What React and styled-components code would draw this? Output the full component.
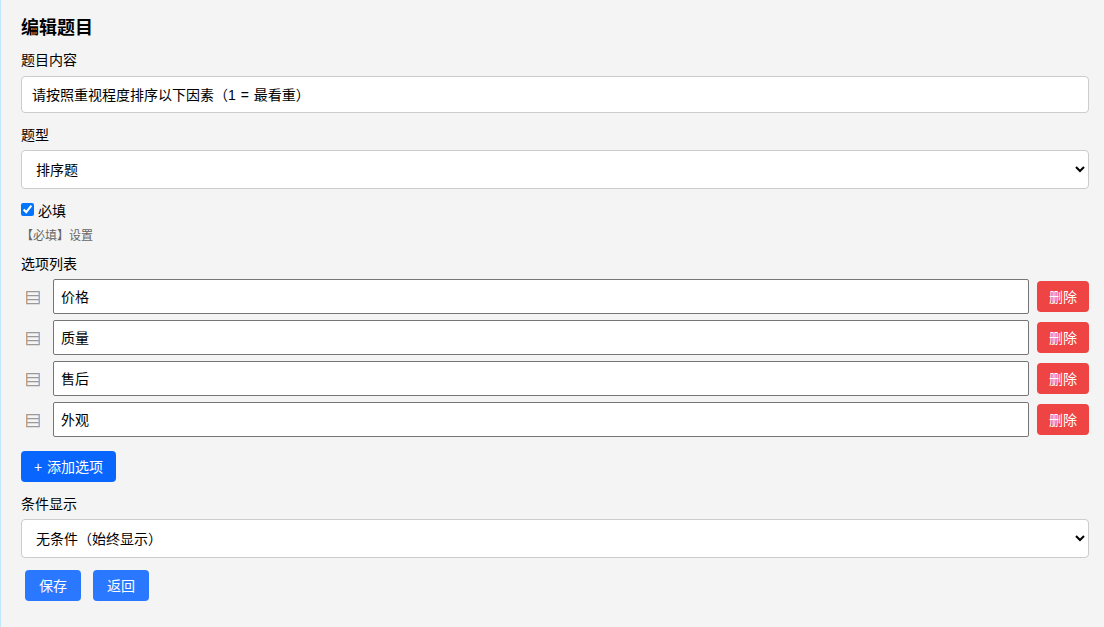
import React from "react";
import styled, { createGlobalStyle } from "styled-components";

const GlobalStyle = createGlobalStyle`
  html, body {
    margin: 0;
    padding: 0;
    background: #f4f4f4;
  }
  body {
    font-family: "Liberation Sans", Arial, "Noto Sans CJK SC", sans-serif;
    color: #000;
  }
`;

const Page = styled.div`
  box-sizing: border-box;
  height: 627px;
  padding: 17px 15px 0 20px;
  border-left: 1px solid #bfe6fb;
  overflow: hidden;
`;

const Title = styled.h2`
  margin: 0 0 13px;
  font-size: 18px;
  line-height: 22px;
  font-weight: 700;
`;

const Label = styled.label`
  display: block;
  margin-top: ${(p) => p.$top || 0}px;
  margin-bottom: ${(p) => p.$gap || 7}px;
  font-size: 14px;
  line-height: 17px;
`;

const TextInput = styled.input`
  display: block;
  box-sizing: border-box;
  width: 100%;
  height: 37px;
  margin-bottom: 14px;
  padding: 0 10px 2px;
  border: 1px solid #ccc;
  border-radius: 4px;
  background: #fff;
  font: inherit;
  font-size: 14px;
  word-spacing: 1px;
`;

const Select = styled.select`
  display: block;
  box-sizing: border-box;
  width: 100%;
  height: 39px;
  margin-bottom: ${(p) => p.$gap || 0}px;
  padding: 0 10px;
  border: 1px solid #ccc;
  border-radius: 4px;
  background: #fff;
  font: inherit;
  font-size: 14px;
  color: #000;
`;

const CheckRow = styled.label`
  display: flex;
  align-items: center;
  gap: 4px;
  height: 17px;
  font-size: 14px;
  input {
    width: 13px;
    height: 13px;
    margin: 0;
    accent-color: #0075ff;
  }
`;

const Hint = styled.div`
  margin: 11px 0 12px;
  font-size: 12px;
  line-height: 15px;
  color: #666;
`;

const OptionList = styled.div`
  display: flex;
  flex-direction: column;
  gap: 6px;
  margin-bottom: 14px;
`;

const OptionRow = styled.div`
  display: flex;
  align-items: center;
  height: 35px;
`;

const Handle = styled.svg`
  flex: none;
  width: 14px;
  height: 14px;
  margin: 2px 13px 0 5px;
`;

const OptionInput = styled.input`
  flex: 1;
  min-width: 0;
  box-sizing: border-box;
  height: 35px;
  margin: 0;
  padding: 0 7px 2px;
  border: 1px solid #767676;
  border-radius: 2px;
  background: #fff;
  font: inherit;
  font-size: 14px;
`;

const Button = styled.button`
  flex: none;
  height: 31px;
  padding: 0 ${(p) => p.$px || 14}px;
  border: 0;
  border-radius: 4px;
  background: ${(p) => p.$bg || "#2a78ff"};
  color: #fff;
  font: inherit;
  font-size: 14px;
  line-height: 1;
  word-spacing: 1px;
`;

const DeleteButton = styled(Button)`
  margin-left: 8px;
  padding: 0 12px;
  background: #ef4444;
`;

const Actions = styled.div`
  display: flex;
  gap: 12px;
  margin: 12px 0 0 4px;
`;

const DragIcon = () => (
  <Handle viewBox="0 0 14 14" fill="none">
    <path d="M1 .6h12M1 4.6h12M1 8.6h12M1 12.6h12" stroke="#999" strokeWidth="1.2" />
    <path d="M.75 0v13.2" stroke="#c49f82" strokeWidth="1.5" />
    <path d="M13.25 0v13.2" stroke="#97aacb" strokeWidth="1.5" />
  </Handle>
);

const options = ["价格", "质量", "售后", "外观"];

export default function App() {
  return (
    <Page>
      <GlobalStyle />
      <Title>编辑题目</Title>
      <Label>题目内容</Label>
      <TextInput defaultValue="请按照重视程度排序以下因素（1 = 最看重）" />
      <Label $gap={6}>题型</Label>
      <Select $gap={12} defaultValue="rank">
        <option value="rank">排序题</option>
      </Select>
      <CheckRow>
        <input type="checkbox" defaultChecked />
        必填
      </CheckRow>
      <Hint>【必填】设置</Hint>
      <Label $gap={6}>选项列表</Label>
      <OptionList>
        {options.map((o) => (
          <OptionRow key={o}>
            <DragIcon />
            <OptionInput defaultValue={o} />
            <DeleteButton>删除</DeleteButton>
          </OptionRow>
        ))}
      </OptionList>
      <Button $bg="#0866ff" $px={13}>+ 添加选项</Button>
      <Label $top={14} $gap={6}>条件显示</Label>
      <Select defaultValue="none">
        <option value="none">无条件（始终显示）</option>
      </Select>
      <Actions>
        <Button>保存</Button>
        <Button>返回</Button>
      </Actions>
    </Page>
  );
}
